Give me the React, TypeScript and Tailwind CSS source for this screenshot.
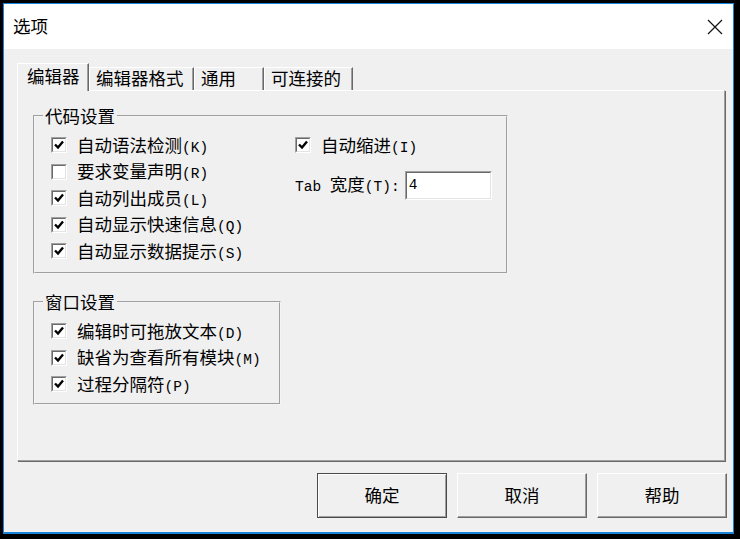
import React from "react";

const cjk = "font-['Noto_Sans_CJK_SC',sans-serif]";
const mono = "font-['Liberation_Mono','Noto_Sans_CJK_SC',monospace] text-[14.5px]";

function Label({ text, hotkey }: { text: string; hotkey: string }) {
  return (
    <span className="whitespace-nowrap leading-none text-black">
      <span className="text-[17.5px]">{text}</span>
      <span className={mono}>({hotkey})</span>
    </span>
  );
}

function Checkbox({ checked }: { checked: boolean }) {
  return (
    <div className="w-[16px] h-[16px] shrink-0 border border-t-[#a0a0a0] border-l-[#a0a0a0] border-r-white border-b-white">
      <div className="w-full h-full bg-white border border-t-[#696969] border-l-[#696969] border-r-[#e3e3e3] border-b-[#e3e3e3] flex items-center justify-center">
        {checked && (
          <svg width="12" height="12" viewBox="0 0 12 12">
            <polyline points="2,5.5 5,8.5 10,2.5" fill="none" stroke="#000" strokeWidth="2.4" />
          </svg>
        )}
      </div>
    </div>
  );
}

function CheckRow({ text, hotkey, checked = true }: { text: string; hotkey: string; checked?: boolean }) {
  return (
    <div className="h-[26.5px] flex items-center gap-[10px]">
      <Checkbox checked={checked} />
      <Label text={text} hotkey={hotkey} />
    </div>
  );
}

function Group({ title, className, children }: { title: string; className: string; children: React.ReactNode }) {
  return (
    <fieldset className={`border-2 [border-style:groove] border-[#f4f4f4] p-0 ${className}`}>
      <legend className="ml-[8px] px-[2px] text-[17.5px] leading-[24px] text-black">{title}</legend>
      {children}
    </fieldset>
  );
}

function Tab({ label, active, w }: { label: string; active?: boolean; w: string }) {
  return (
    <div
      className={`${w} ${
        active ? "h-[28px] -mb-px relative z-10 pl-[9px] pb-[3px]" : "h-[23px] pl-[6px] pb-[2px]"
      } bg-[#f0f0f0] border-l border-t border-l-white border-t-white border-r border-r-[#696969] shadow-[inset_-1px_0_0_#a0a0a0] flex items-center text-[17.5px] leading-none text-black whitespace-nowrap`}
    >
      {label}
    </div>
  );
}

function Button({ label, primary }: { label: string; primary?: boolean }) {
  return (
    <div
      className={`w-[130px] h-[45px] flex items-center justify-center text-[17.5px] text-black bg-[#f0f0f0] border ${
        primary
          ? "border-[#4a4a4a] shadow-[inset_1px_1px_0_#ffffff,inset_-1px_-1px_0_#a0a0a0]"
          : "border-t-white border-l-white border-r-[#696969] border-b-[#696969] shadow-[inset_-1px_-1px_0_#a0a0a0]"
      }`}
    >
      {label}
    </div>
  );
}

export default function App() {
  return (
    <div className={`w-[740px] h-[539px] bg-black pt-[3px] pl-[3px] ${cjk}`}>
      <div className="w-[731px] h-[531px] border border-[#1883d7] border-b-2 flex flex-col bg-[#f0f0f0]">
        <div className="h-[45px] bg-white flex items-center justify-between pl-[9px] pr-[10px]">
          <span className="text-[17.5px] text-black">选项</span>
          <svg width="16" height="16" viewBox="0 0 16 16">
            <path d="M1 1 L15 15 M15 1 L1 15" stroke="#111" strokeWidth="1.2" />
          </svg>
        </div>

        <div className="flex flex-col">
          <div className="ml-[13px] mt-[14px] h-[27px] flex items-end">
            <Tab label="编辑器" active w="w-[72px]" />
            <Tab label="编辑器格式" w="w-[105px]" />
            <Tab label="通用" w="w-[70px]" />
            <Tab label="可连接的" w="w-[89px]" />
          </div>

          <div className="ml-[13px] w-[708px] h-[371px] border border-t-white border-l-white border-r-[#a0a0a0] border-b-[#a0a0a0] shadow-[1px_1px_0_#696969] flex flex-col">
            <Group title="代码设置" className="ml-[15px] mt-[13px] w-[475px] h-[170px]">
              <div className="flex pt-[4px] pl-[16px]">
                <div className="w-[244px] flex flex-col">
                  <CheckRow text="自动语法检测" hotkey="K" />
                  <CheckRow text="要求变量声明" hotkey="R" checked={false} />
                  <CheckRow text="自动列出成员" hotkey="L" />
                  <CheckRow text="自动显示快速信息" hotkey="Q" />
                  <CheckRow text="自动显示数据提示" hotkey="S" />
                </div>
                <div className="flex flex-col">
                  <CheckRow text="自动缩进" hotkey="I" />
                  <div className="mt-[12px] h-[29px] flex items-center gap-[5px]">
                    <span className="whitespace-nowrap leading-none text-black">
                      <span className={mono}>Tab </span>
                      <span className="text-[17.5px]">宽度</span>
                      <span className={mono}>(T):</span>
                    </span>
                    <div className="w-[87px] h-[29px] border border-t-[#a0a0a0] border-l-[#a0a0a0] border-r-white border-b-white">
                      <div className="w-full h-full bg-white border border-t-[#696969] border-l-[#696969] border-r-[#e3e3e3] border-b-[#e3e3e3] flex items-center pl-[2px]">
                        <span className={`${mono} leading-none text-black`}>4</span>
                      </div>
                    </div>
                  </div>
                </div>
              </div>
            </Group>

            <Group title="窗口设置" className="ml-[15px] mt-[16px] w-[248px] h-[115px]">
              <div className="flex flex-col pt-[4px] pl-[16px]">
                <CheckRow text="编辑时可拖放文本" hotkey="D" />
                <CheckRow text="缺省为查看所有模块" hotkey="M" />
                <CheckRow text="过程分隔符" hotkey="P" />
              </div>
            </Group>
          </div>

          <div className="mt-[12px] flex justify-end gap-[10px] pr-[6px]">
            <Button label="确定" primary />
            <Button label="取消" />
            <Button label="帮助" />
          </div>
        </div>
      </div>
    </div>
  );
}
